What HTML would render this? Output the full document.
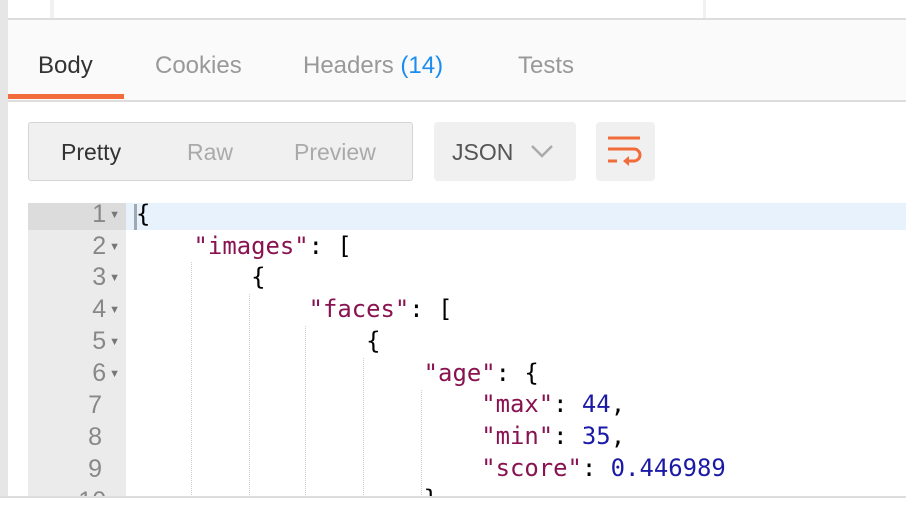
<!DOCTYPE html>
<html><head><style>
body{margin:0;width:906px;height:506px;overflow:hidden;background:#fff;font-family:"Liberation Sans",sans-serif;position:relative}
.abs{position:absolute}
.code{font-family:"DejaVu Sans Mono","Liberation Mono",monospace;font-size:23.9px;white-space:pre;color:#000}
.k{color:#881350}.n{color:#1a1aa6}
.ln{position:absolute;left:28px;width:92px;text-align:right;color:#888;font-family:"Liberation Sans",sans-serif;font-size:25px}
.ar{font-size:11px;color:#777;vertical-align:middle;margin-left:3px}
.g{position:absolute;border-left:1px dotted #ccc;width:0}
</style></head><body>
<div class="abs" style="left:0;top:0;width:8px;height:506px;background:#e6e6e6"></div>
<div class="abs" style="left:50px;top:0;width:4px;height:18px;background:#f1f1f1"></div>
<div class="abs" style="left:703px;top:0;width:3px;height:18px;background:#f1f1f1"></div>
<div class="abs" style="left:8px;top:18px;width:898px;height:2px;background:#ddd"></div>
<div class="abs" style="left:8px;top:20px;width:898px;height:80px;background:#fafafa"></div>
<div class="abs" style="left:8px;top:100px;width:898px;height:2px;background:#ddd"></div>
<div class="abs" style="left:8px;top:94px;width:116px;height:5px;background:#f26b3a"></div>
<div class="abs" style="left:38px;top:52px;font-size:24px;color:#333">Body</div>
<div class="abs" style="left:155px;top:52px;font-size:24px;color:#999">Cookies</div>
<div class="abs" style="left:303px;top:52px;font-size:24px;color:#999">Headers <span style="color:#1b8cf0">(14)</span></div>
<div class="abs" style="left:518px;top:52px;font-size:24px;color:#999">Tests</div>
<div class="abs" style="left:28px;top:122px;width:383px;height:57px;background:#f0f0f0;border:1px solid #d4d4d4;border-radius:3px"></div>
<div class="abs" style="left:61px;top:139px;font-size:23px;color:#333">Pretty</div>
<div class="abs" style="left:187px;top:139px;font-size:23px;color:#aaa">Raw</div>
<div class="abs" style="left:294px;top:139px;font-size:23px;color:#aaa">Preview</div>
<div class="abs" style="left:434px;top:122px;width:142px;height:59px;background:#f0f0f0;border-radius:4px"></div>
<div class="abs" style="left:452px;top:139px;font-size:23px;color:#555">JSON</div>
<svg class="abs" style="left:530px;top:143px" width="24" height="16"><path d="M2 3 L12 13 L22 3" stroke="#aaa" stroke-width="2.5" fill="none"/></svg>
<div class="abs" style="left:596px;top:122px;width:59px;height:59px;background:#f0f0f0;border-radius:4px"></div>
<svg class="abs" style="left:596px;top:122px" width="59" height="59">
<path d="M12 16H44M12 27H38a6 6 0 0 1 0 12H30M12 39H21" stroke="#f26b3a" stroke-width="3" fill="none"/>
<path d="M27 39 L33 34 L33 44Z" fill="#f26b3a"/></svg>
<div class="abs" style="left:0;top:0;width:906px;height:496px;overflow:hidden">
<div class="abs" style="left:28px;top:203px;width:98px;height:294px;background:#ebebeb"></div>
<div class="abs" style="left:28px;top:203px;width:98px;height:27px;background:#dcdcdc"></div>
<div class="abs" style="left:126px;top:203px;width:780px;height:27px;background:#e8f2fc"></div>
<div class="abs" style="left:134px;top:204px;width:3px;height:26px;background:#a0a8b0"></div>
<div class="ln" style="top:200px">1<span class="ar">▼</span></div>
<div class="ln" style="top:232px">2<span class="ar">▼</span></div>
<div class="ln" style="top:263px">3<span class="ar">▼</span></div>
<div class="ln" style="top:295px">4<span class="ar">▼</span></div>
<div class="ln" style="top:327px">5<span class="ar">▼</span></div>
<div class="ln" style="top:359px">6<span class="ar">▼</span></div>
<div class="ln" style="top:391px;width:74px">7</div>
<div class="ln" style="top:423px;width:74px">8</div>
<div class="ln" style="top:455px;width:74px">9</div>
<div class="ln" style="top:487px">10<span class="ar">▼</span></div>
<div class="g" style="left:191px;top:262px;height:235px"></div>
<div class="g" style="left:249px;top:294px;height:203px"></div>
<div class="g" style="left:305px;top:326px;height:171px"></div>
<div class="g" style="left:363px;top:358px;height:139px"></div>
<div class="g" style="left:421px;top:390px;height:107px"></div>
<div class="abs code" style="left:136px;top:199px;line-height:31.7px">{
    <span class="k">"images"</span>: [
        {
            <span class="k">"faces"</span>: [
                {
                    <span class="k">"age"</span>: {
                        <span class="k">"max"</span>: <span class="n">44</span>,
                        <span class="k">"min"</span>: <span class="n">35</span>,
                        <span class="k">"score"</span>: <span class="n">0.446989</span>
                    }</div>
</div>
<div class="abs" style="left:0;top:496px;width:906px;height:2px;background:#ddd"></div>
<div class="abs" style="left:0;top:498px;width:906px;height:8px;background:#fff"></div>
</body></html>
